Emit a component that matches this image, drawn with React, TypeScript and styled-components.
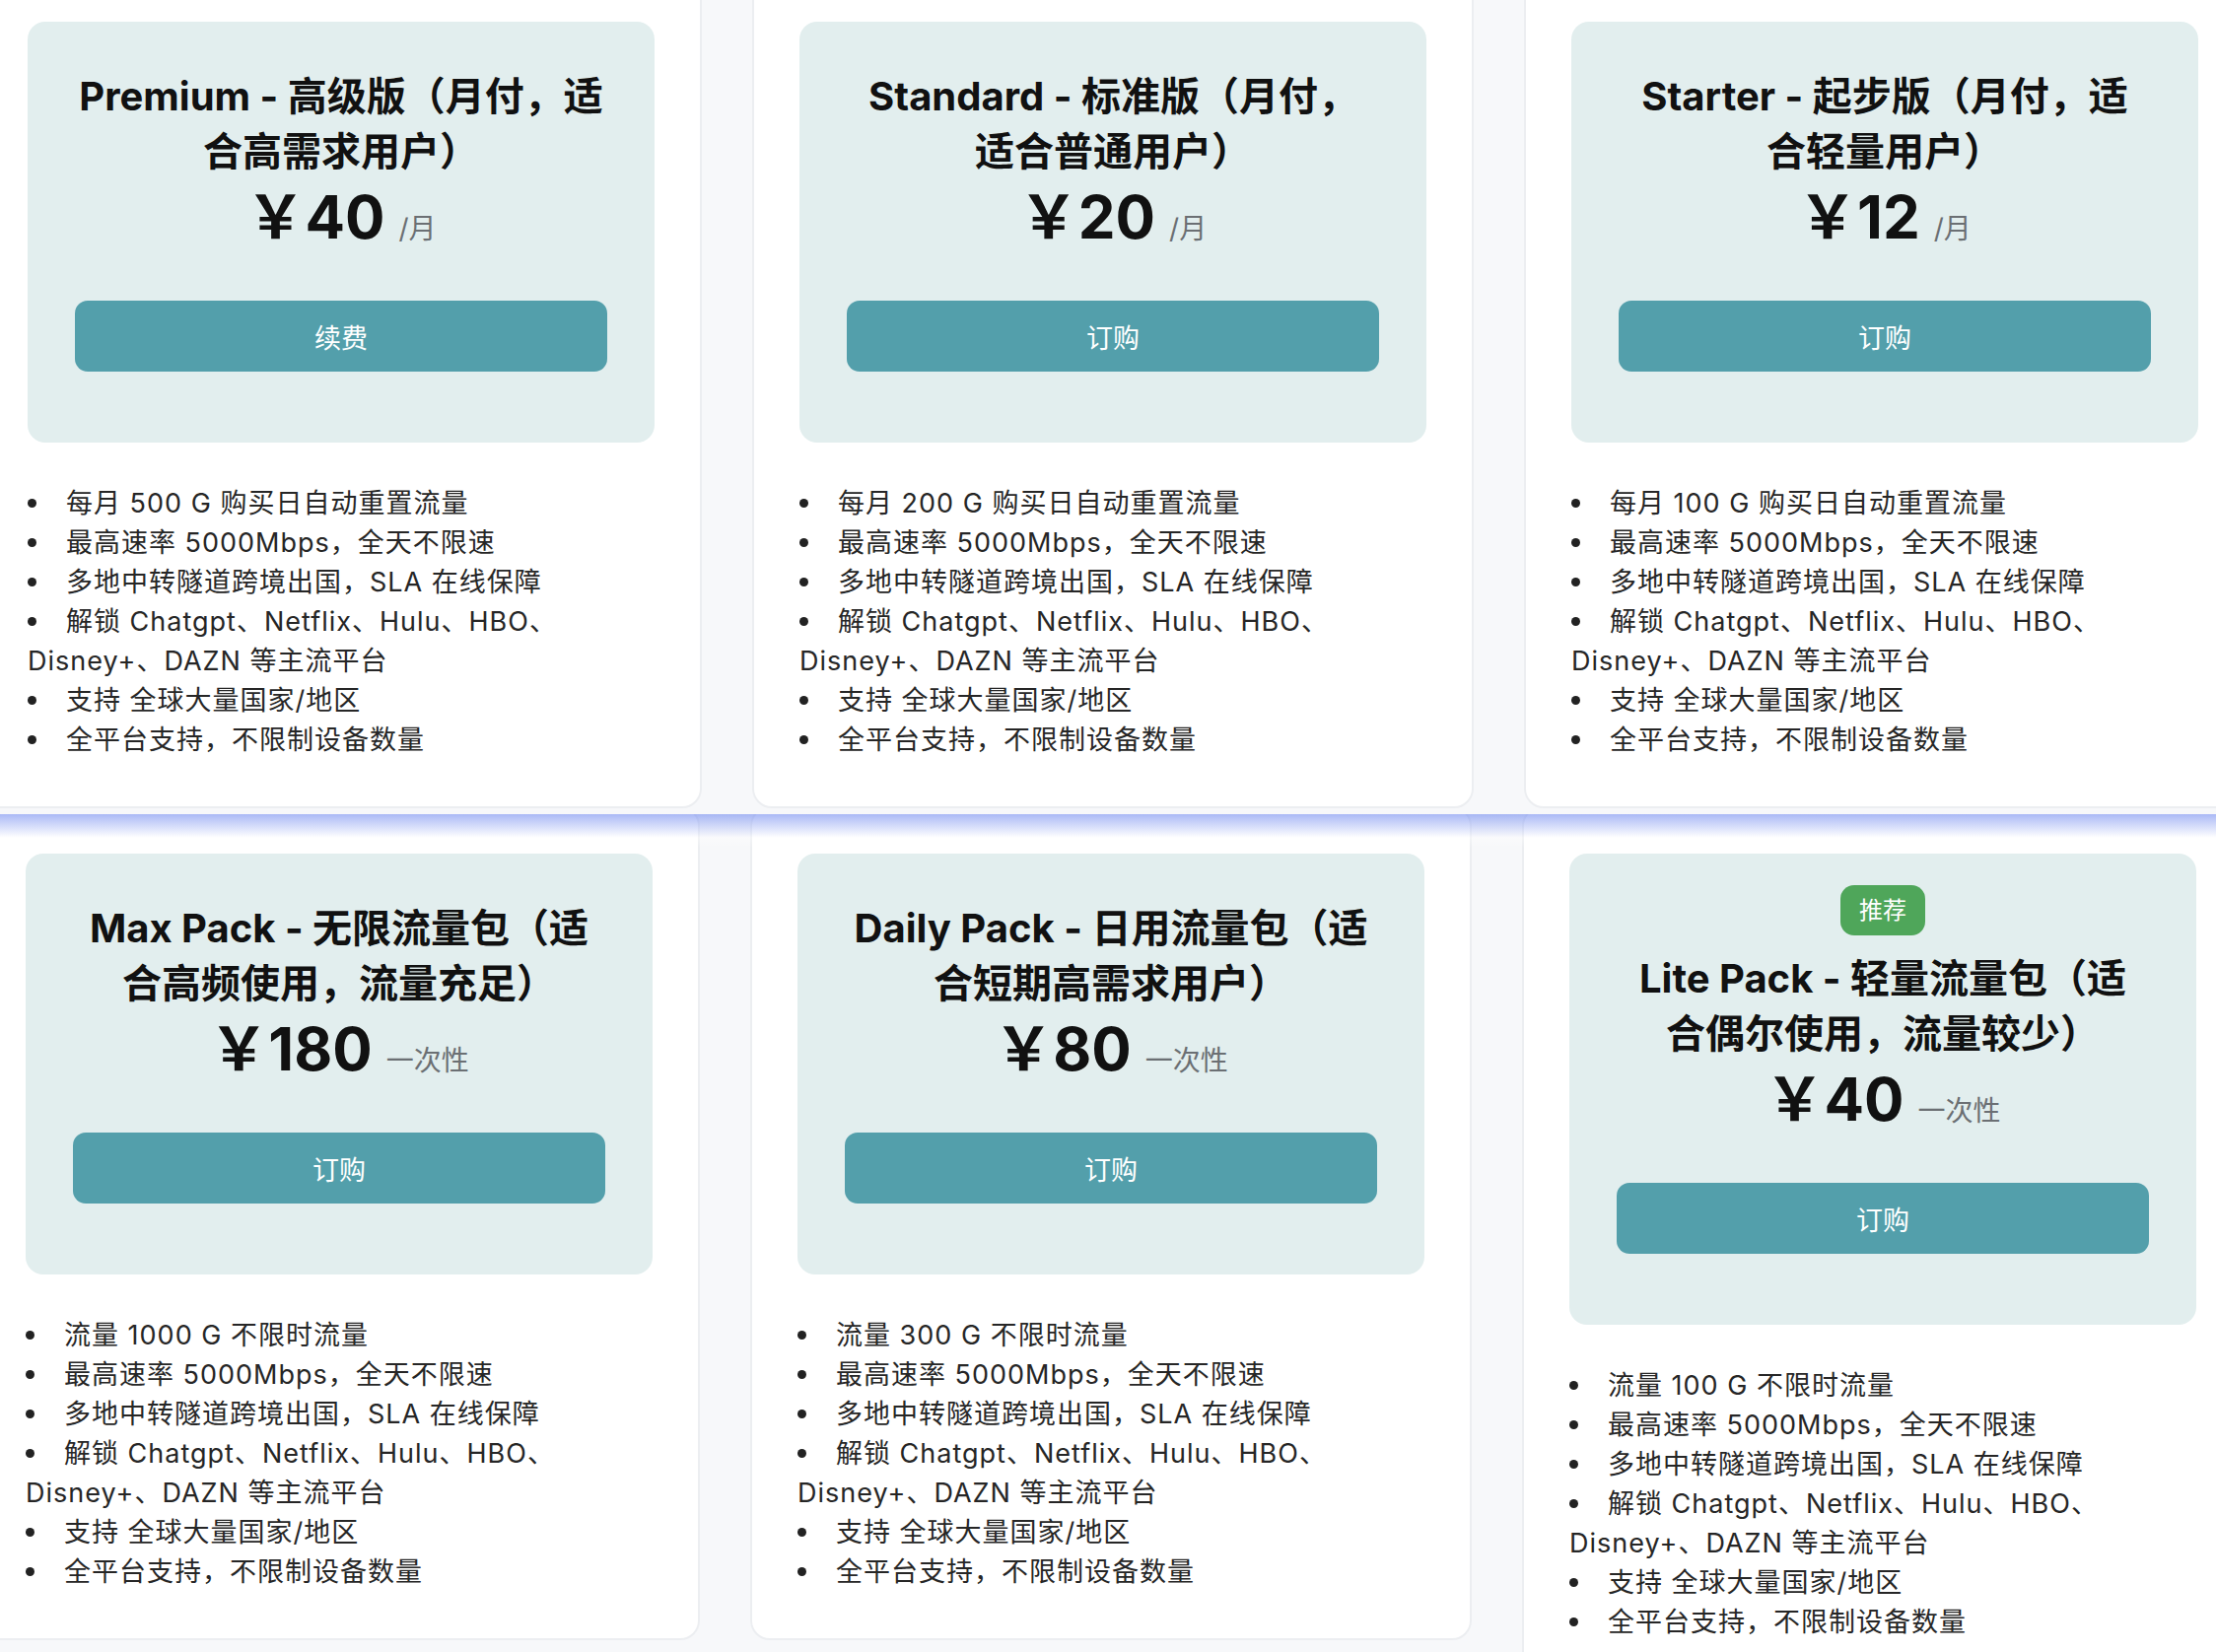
import React from 'react';
import styled, { createGlobalStyle } from 'styled-components';

const GlobalStyle = createGlobalStyle`
  html, body {
    margin: 0;
    padding: 0;
    background: #f7f8fa;
    overflow: hidden;
  }
  body {
    font-family: Inter, "Noto Sans CJK SC", sans-serif;
    -webkit-font-smoothing: antialiased;
  }
`;

type Plan = {
  id: string;
  title: string[];
  price: string;
  unit: string;
  action: string;
  traffic: string;
  badge?: string;
};

const monthly: Plan[] = [
  {
    id: 'premium',
    title: ['Premium - 高级版（月付，适', '合高需求用户）'],
    price: '40',
    unit: '/月',
    action: '续费',
    traffic: '每月 500 G 购买日自动重置流量',
  },
  {
    id: 'standard',
    title: ['Standard - 标准版（月付，', '适合普通用户）'],
    price: '20',
    unit: '/月',
    action: '订购',
    traffic: '每月 200 G 购买日自动重置流量',
  },
  {
    id: 'starter',
    title: ['Starter - 起步版（月付，适', '合轻量用户）'],
    price: '12',
    unit: '/月',
    action: '订购',
    traffic: '每月 100 G 购买日自动重置流量',
  },
];

const packs: Plan[] = [
  {
    id: 'max',
    title: ['Max Pack - 无限流量包（适', '合高频使用，流量充足）'],
    price: '180',
    unit: '一次性',
    action: '订购',
    traffic: '流量 1000 G 不限时流量',
  },
  {
    id: 'daily',
    title: ['Daily Pack - 日用流量包（适', '合短期高需求用户）'],
    price: '80',
    unit: '一次性',
    action: '订购',
    traffic: '流量 300 G 不限时流量',
  },
  {
    id: 'lite',
    title: ['Lite Pack - 轻量流量包（适', '合偶尔使用，流量较少）'],
    price: '40',
    unit: '一次性',
    action: '订购',
    traffic: '流量 100 G 不限时流量',
    badge: '推荐',
  },
];

const Page = styled.main`
  width: 2248px;
  height: 1676px;
  display: flex;
  flex-direction: column;
  overflow: hidden;
  background: #f7f8fa;
`;

const Section = styled.section<{ $height?: number }>`
  position: relative;
  overflow: hidden;
  flex: ${(p) => (p.$height ? `0 0 ${p.$height}px` : '1 1 auto')};
`;

const TopFade = styled.div`
  position: absolute;
  top: 0;
  left: 0;
  right: 0;
  height: 34px;
  background: linear-gradient(to bottom, rgba(118, 142, 240, 0.62), rgba(255, 255, 255, 0.35) 70%, rgba(255, 255, 255, 0));
  pointer-events: none;
  z-index: 2;
`;

const CardGrid = styled.div<{ $top: number; $left: number }>`
  display: grid;
  grid-template-columns: repeat(3, 732px);
  column-gap: 51px;
  align-items: start;
  margin-top: ${(p) => p.$top}px;
  margin-left: ${(p) => p.$left}px;
`;

const Card = styled.article`
  background: #ffffff;
  border: 2px solid #eceef1;
  border-radius: 20px;
  padding: 46px 46px 47px;
`;

const Panel = styled.div`
  background: #e2eeee;
  border-radius: 18px;
  padding: 48px 48px 72px;
  display: flex;
  flex-direction: column;
  align-items: center;
  text-align: center;
`;

const Badge = styled.span`
  display: inline-block;
  height: 51px;
  line-height: 51px;
  padding: 0 19px;
  margin: -16px 0 16px;
  border-radius: 14px;
  background: #4fa65a;
  color: #ffffff;
  font-size: 24px;
`;

const Title = styled.h3`
  margin: 0;
  font-size: 40px;
  line-height: 56px;
  font-weight: 700;
  color: #111111;
`;

const TitleLine = styled.span`
  display: block;
  white-space: nowrap;
`;

const Price = styled.div`
  font-size: 60px;
  line-height: 76px;
  font-weight: 700;
  color: #111111;
  white-space: nowrap;
`;

const Unit = styled.span`
  margin-left: 14px;
  font-size: 28px;
  font-weight: 400;
  color: #6b6f73;
`;

const ActionButton = styled.button`
  margin-top: 35px;
  width: 100%;
  height: 72px;
  border: none;
  border-radius: 13px;
  background: #539fab;
  color: #ffffff;
  font-family: inherit;
  font-size: 27px;
  cursor: pointer;
`;

const Features = styled.ul`
  margin: 42px 0 0;
  padding: 0;
  list-style: none;
  font-size: 27px;
  line-height: 40px;
  letter-spacing: 1px;
  color: #262626;
`;

const Feature = styled.li`
  white-space: nowrap;

  &::before {
    content: '';
    display: inline-block;
    width: 9px;
    height: 9px;
    margin-right: 30px;
    border-radius: 50%;
    background: #222222;
    vertical-align: middle;
    position: relative;
    top: -2px;
  }
`;

const PlanCard = ({ plan }: { plan: Plan }) => (
  <Card>
    <Panel>
      {plan.badge && <Badge>{plan.badge}</Badge>}
      <Title>
        {plan.title.map((line) => (
          <TitleLine key={line}>{line}</TitleLine>
        ))}
      </Title>
      <Price>
        ￥{plan.price}
        <Unit>{plan.unit}</Unit>
      </Price>
      <ActionButton>{plan.action}</ActionButton>
    </Panel>
    <Features>
      <Feature>{plan.traffic}</Feature>
      <Feature>最高速率 5000Mbps，全天不限速</Feature>
      <Feature>多地中转隧道跨境出国，SLA 在线保障</Feature>
      <Feature>
        解锁 Chatgpt、Netflix、Hulu、HBO、
        <br />
        Disney+、DAZN 等主流平台
      </Feature>
      <Feature>支持 全球大量国家/地区</Feature>
      <Feature>全平台支持，不限制设备数量</Feature>
    </Features>
  </Card>
);

export default function App() {
  return (
    <>
      <GlobalStyle />
      <Page>
        <Section $height={826}>
          <CardGrid $top={-26} $left={-20}>
            {monthly.map((plan) => (
              <PlanCard key={plan.id} plan={plan} />
            ))}
          </CardGrid>
        </Section>
        <Section>
          <TopFade />
          <CardGrid $top={-8} $left={-22}>
            {packs.map((plan) => (
              <PlanCard key={plan.id} plan={plan} />
            ))}
          </CardGrid>
        </Section>
      </Page>
    </>
  );
}
